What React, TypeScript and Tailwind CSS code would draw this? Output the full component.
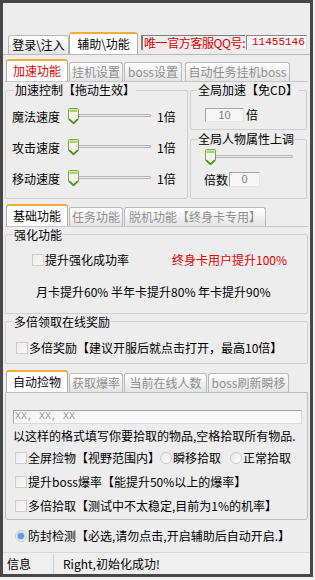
import React from "react";

const FONT = "font-['Noto_Sans_CJK_SC','Noto_Sans',sans-serif]";

type TabProps = { label: React.ReactNode; w: string; active?: boolean; red?: boolean; dim?: boolean };

function Tab({ label, w, active, red, dim }: TabProps) {
  if (active) {
    return (
      <div
        className={`${w} h-[22px] bg-white border border-b-0 border-[#a9a9a9] border-t-2 border-t-[#f2ac3c] rounded-t-[3px] flex items-center justify-center leading-none whitespace-nowrap ${
          red ? "text-[#e00000]" : "text-black"
        }`}
      >
        {label}
      </div>
    );
  }
  return (
    <div
      className={`${w} h-[19px] bg-linear-to-b from-white to-[#e4e4e4] border border-b-0 border-[#b8b8b8] rounded-t-[3px] flex items-center justify-center leading-none whitespace-nowrap ${
        dim ? "text-[#8e8e8e]" : "text-black"
      }`}
    >
      {label}
    </div>
  );
}

function Thumb() {
  return (
    <svg width="11" height="17" viewBox="0 0 11 17" className="absolute left-0 top-0">
      <path d="M1.5 0.5h8a1 1 0 0 1 1 1V11L5.5 16 0.5 11V1.5a1 1 0 0 1 1-1z" fill="#f4f4ef" stroke="#7aa64a" />
      <rect x="1.5" y="1.5" width="8" height="2.5" fill="#a9d465" />
      <path d="M1.2 11.2L5.5 15.2 9.8 11.2" fill="none" stroke="#4d8f1f" strokeWidth="1.6" />
    </svg>
  );
}

function Slider({ w }: { w: string }) {
  return (
    <div className={`relative ${w} h-[17px]`}>
      <div className="absolute left-[8px] right-0 top-[6px] h-[3px] border border-[#b5b5b5] bg-[#ececec] rounded-[1px]" />
      <Thumb />
    </div>
  );
}

function Check() {
  return <span className="w-[12px] h-[12px] border border-[#cdcdcd] bg-linear-to-br from-[#ececec] to-[#fafafa] shrink-0" />;
}

function Radio({ on }: { on?: boolean }) {
  return (
    <span className="w-[12px] h-[12px] rounded-full border border-[#c9c9c9] bg-linear-to-br from-[#e6e6e6] to-white shrink-0 flex items-center justify-center">
      {on && <span className="w-[6px] h-[6px] rounded-full bg-[#5b9be0] ring-1 ring-[#a9cdf2]" />}
    </span>
  );
}

function SpeedRow({ label }: { label: string }) {
  return (
    <div className="h-[31px] flex items-center pl-[6px]">
      <span className="w-[56px]">{label}</span>
      <Slider w="w-[83px]" />
      <span className="ml-[6px]">1倍</span>
    </div>
  );
}

export default function App() {
  return (
    <div className={`w-[315px] h-[580px] bg-[#f0f0f0] ${FONT} text-[12px] text-black`}>
      <div className="w-[313px] h-[577px] border-[3px] border-[#474747] bg-[#ededed] flex flex-col">
        <div className="h-[30px]" />

        {/* top tabs */}
        <div className="h-[21px] flex items-end pl-[5px]">
          <Tab label={"登录\\注入"} w="w-[61px]" />
          <Tab label={"辅助\\功能"} w="w-[69px]" active />
          <div className="self-start mt-[2px] ml-[3px] w-[104px] h-[15px] border-l-2 border-t border-[#7d7d7d] text-[#e00000] flex items-center pl-[1px] leading-none whitespace-nowrap overflow-hidden tracking-[-0.4px]">
            唯一官方客服QQ号:
          </div>
          <div className="self-start mt-[2px] ml-[1px] w-[61px] h-[15px] border border-[#8a8a8a] border-r-[#e0e0e0] border-b-[#e0e0e0] bg-[#f7f7f7] text-[#d00000] font-['Liberation_Mono',monospace] text-[11px] leading-none flex items-center pl-[5px] whitespace-nowrap">
            11455146
          </div>
        </div>

        {/* main tab page */}
        <div className="h-[498px] border-t border-[#b9b9b9] px-[2px] flex flex-col">
          <div className="mt-[4px] h-[22px] flex items-end gap-[1px] pl-[1px]">
            <Tab label="加速功能" w="w-[62px]" active red />
            <Tab label="挂机设置" w="w-[54px]" dim />
            <Tab label="boss设置" w="w-[58px]" dim />
            <div className="w-[1px]" />
            <Tab label="自动任务挂机boss" w="w-[105px]" dim />
          </div>

          {/* page 1 */}
          <div className="h-[120px] border-t border-[#c6c6c6] flex gap-[2px]">
            <fieldset className="mt-[1px] w-[183px] h-[116px] border border-[#cfcfcf] rounded-[2px]">
              <legend className="ml-[8px] px-[1px] leading-[14px]">加速控制【拖动生效】</legend>
              <div className="pt-[4px]">
                <SpeedRow label="魔法速度" />
                <SpeedRow label="攻击速度" />
                <SpeedRow label="移动速度" />
              </div>
            </fieldset>
            <div className="w-[117px] flex flex-col">
              <fieldset className="mt-[1px] h-[47px] border border-[#cfcfcf] rounded-[2px]">
                <legend className="ml-[6px] px-[1px] leading-[14px]">全局加速【免CD】</legend>
                <div className="pt-[11px] pl-[14px] flex items-center">
                  <div className="w-[39px] h-[14px] border border-[#a5a5a5] border-r-[#e5e5e5] border-b-[#e5e5e5] bg-[#f6f6f6] text-[#7a7a7a] text-center leading-[12px] font-['Liberation_Sans',sans-serif] text-[11px]">
                    10
                  </div>
                  <span className="ml-[2px] leading-none">倍</span>
                </div>
              </fieldset>
              <fieldset className="mt-[2px] h-[67px] border border-[#cfcfcf] rounded-[2px]">
                <legend className="ml-[6px] px-[1px] leading-[14px]">全局人物属性上调</legend>
                <div className="pt-[3px] pl-[14px]">
                  <Slider w="w-[88px]" />
                </div>
                <div className="mt-[6px] pl-[13px] flex items-center">
                  <span className="leading-none">倍数</span>
                  <div className="ml-[1px] w-[31px] h-[15px] border border-[#a5a5a5] border-r-[#e5e5e5] border-b-[#e5e5e5] bg-[#f6f6f6] text-[#7a7a7a] text-center leading-[13px] font-['Liberation_Sans',sans-serif] text-[11px]">
                    0
                  </div>
                </div>
              </fieldset>
            </div>
          </div>

          <div className="mt-[2px] h-[23px] flex items-end gap-[1px] pl-[1px]">
            <Tab label="基础功能" w="w-[62px]" active />
            <Tab label="任务功能" w="w-[54px]" dim />
            <Tab label="脱机功能【终身卡专用】" w="w-[142px]" dim />
          </div>

          {/* page 2 */}
          <div className="h-[141px] border-t border-[#c6c6c6] flex flex-col">
            <fieldset className="mt-[1px] h-[86px] border border-[#cfcfcf] rounded-[2px]">
              <legend className="ml-[7px] px-[1px] leading-[14px]">强化功能</legend>
              <div className="mt-[10px] h-[16px] pl-[26px] flex items-center">
                <Check />
                <span className="ml-[1px] w-[84px] leading-none">提升强化成功率</span>
                <span className="ml-[43px] text-[#e00000] leading-none">终身卡用户提升100%</span>
              </div>
              <div className="mt-[16px] h-[16px] pl-[30px] flex items-center leading-none">
                月卡提升60% 半年卡提升80% 年卡提升90%
              </div>
            </fieldset>
            <fieldset className="mt-[1px] h-[49px] border border-[#cfcfcf] rounded-[2px]">
              <legend className="ml-[7px] px-[1px] leading-[14px]">多倍领取在线奖励</legend>
              <div className="mt-[11px] h-[16px] pl-[10px] flex items-center">
                <Check />
                <span className="ml-[1px] leading-none">多倍奖励【建议开服后就点击打开，最高10倍】</span>
              </div>
            </fieldset>
          </div>

          <div className="mt-[4px] h-[22px] flex items-end gap-[1px] pl-[1px]">
            <Tab label="自动捡物" w="w-[62px]" active />
            <Tab label="获取爆率" w="w-[54px]" dim />
            <Tab label="当前在线人数" w="w-[83px]" dim />
            <Tab label="boss刷新瞬移" w="w-[81px]" dim />
          </div>

          {/* page 3 */}
          <div className="h-[128px] border border-[#bdbdbd] rounded-b-[3px] flex flex-col">
            <div className="mt-[17px] ml-[7px] w-[289px] h-[14px] border border-[#a0a0a0] border-r-[#dcdcdc] border-b-[#dcdcdc] bg-[#f7f7f7] text-[#9a9a9a] font-['Liberation_Mono',monospace] text-[10px] leading-[12px] pl-[1px]">
              XX, XX, XX
            </div>
            <div className="mt-[4px] h-[16px] pl-[7px] flex items-center leading-none">
              以这样的格式填写你要拾取的物品,空格拾取所有物品.
            </div>
            <div className="mt-[2px] h-[24px] pl-[9px] flex items-center leading-none">
              <Check />
              <span className="ml-[1px] w-[132px]">全屏捡物【视野范围内】</span>
              <Radio />
              <span className="ml-[1px] w-[57px]">瞬移拾取</span>
              <Radio />
              <span className="ml-[1px]">正常拾取</span>
            </div>
            <div className="h-[24px] pl-[9px] flex items-center leading-none">
              <Check />
              <span className="ml-[1px]">提升boss爆率【能提升50%以上的爆率】</span>
            </div>
            <div className="h-[24px] pl-[9px] flex items-center leading-none">
              <Check />
              <span className="ml-[1px]">多倍拾取【测试中不太稳定,目前为1%的机率】</span>
            </div>
          </div>

          <div className="h-[32px] pl-[10px] flex items-center leading-none">
            <Radio on />
            <span className="ml-[1px]">防封检测【必选,请勿点击,开启辅助后自动开启.】</span>
          </div>
        </div>

        {/* status bar */}
        <div className="h-[22px] border-t border-[#d8d8d8] bg-[#efefef] flex items-center">
          <span className="w-[50px] pl-[4px] leading-none">信息</span>
          <span className="w-[1px] h-[20px] bg-[#d0d0d0]" />
          <span className="pl-[9px] leading-none">Right,初始化成功!</span>
        </div>
      </div>
    </div>
  );
}
